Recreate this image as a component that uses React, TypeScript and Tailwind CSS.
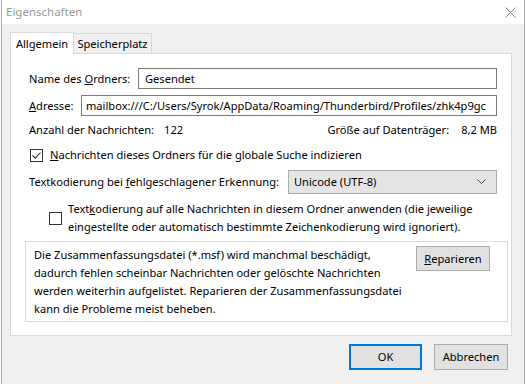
import React from "react";

const font = { fontFamily: '"Noto Sans", "Open Sans", sans-serif' };

function Check({ checked }: { checked?: boolean }) {
  return (
    <span className="flex h-[13px] w-[13px] shrink-0 items-center justify-center border border-[#333] bg-white">
      {checked && (
        <svg width="11" height="11" viewBox="0 0 11 11" fill="none">
          <path d="M1.5 5.5 L4.2 8.2 L9.5 2.5" stroke="#333" strokeWidth="1.1" />
        </svg>
      )}
    </span>
  );
}

export default function App() {
  return (
    <div className="h-[384px] w-[526px] whitespace-nowrap bg-white text-[11.1px] leading-[18px] text-black" style={font}>
      <div className="ml-px flex h-[384px] w-[524px] flex-col border-x border-[#a9a9a9]">
        {/* title bar */}
        <div className="flex h-[24px] shrink-0 items-center justify-between bg-white pl-[4px] pr-[8px]">
          <span className="text-[11.5px] text-[#999]">Eigenschaften</span>
          <svg width="11" height="11" viewBox="0 0 11 11">
            <path d="M0.5 0.5 L10.5 10.5 M10.5 0.5 L0.5 10.5" stroke="#888" strokeWidth="1" />
          </svg>
        </div>

        <div className="flex flex-1 flex-col bg-[#f0f0f0] pl-[8px] pr-[10px] pt-[8px]">
          {/* tabs */}
          <div className="flex h-[21px] items-end">
            <div className="relative z-10 -mb-px flex h-[22px] w-[64px] items-center justify-center border border-b-0 border-[#d9d9d9] bg-white">
              Allgemein
            </div>
            <div className="flex h-[20px] w-[78px] items-center justify-center border border-b-0 border-l-0 border-[#d9d9d9] bg-[#f0f0f0]">
              Speicherplatz
            </div>
          </div>

          {/* panel */}
          <div className="flex h-[283px] w-[502px] shrink-0 flex-col border border-[#d9d9d9] bg-white pl-[18px] pr-[14px] pt-[14px]">
            <div className="flex h-[21px] items-center">
              <span className="w-[109px] shrink-0">
                Name des <u>O</u>rdners:
              </span>
              <div className="flex h-[21px] min-w-0 flex-1 items-center border border-[#7a7a7a] px-[6px]">Gesendet</div>
            </div>

            <div className="mt-[6px] flex h-[21px] items-center">
              <span className="w-[52px] shrink-0">
                <u>A</u>dresse:
              </span>
              <div className="flex h-[21px] min-w-0 flex-1 items-center overflow-hidden border border-[#7a7a7a] px-[4px]">
                mailbox:///C:/Users/Syrok/AppData/Roaming/Thunderbird/Profiles/zhk4p9gc
              </div>
            </div>

            <div className="mt-[5px] flex h-[18px] items-center justify-between">
              <span>
                Anzahl der Nachrichten:<span className="ml-[10px]">122</span>
              </span>
              <span>
                Größe auf Datenträger:<span className="ml-[12px]">8,2 MB</span>
              </span>
            </div>

            <div className="mt-[7px] flex h-[18px] items-center gap-[7px] pl-px">
              <Check checked />
              <span>
                <u>N</u>achrichten dieses Ordners für die globale Suche indizieren
              </span>
            </div>

            <div className="mt-[6px] flex h-[24px] items-center">
              <span className="w-[259px] shrink-0">
                Textkodierung bei <u>f</u>ehlgeschlagener Erkennung:
              </span>
              <div className="flex h-[24px] min-w-0 flex-1 items-center justify-between border border-[#acacac] bg-[#e5e5e5] pl-[5px] pr-[10px]">
                <span>Unicode (UTF-8)</span>
                <svg width="9" height="6" viewBox="0 0 9 6">
                  <path d="M0.5 0.5 L4.5 4.5 L8.5 0.5" stroke="#444" fill="none" strokeWidth="1" />
                </svg>
              </div>
            </div>

            <div className="mt-[6px] flex items-center gap-[6px] pl-[20px]">
              <Check />
              <span>
                Text<u>k</u>odierung auf alle Nachrichten in diesem Ordner anwenden (die jeweilige
                <br />
                eingestellte oder automatisch bestimmte Zeichenkodierung wird ignoriert).
              </span>
            </div>

            <div className="mt-[5px] -ml-[4px] flex h-[81px] w-[483px] items-start justify-between border border-[#d9d9d9] pl-[8px] pr-[17px] pt-[4px]">
              <span>
                Die Zusammenfassungsdatei (*.msf) wird manchmal beschädigt,
                <br />
                dadurch fehlen scheinbar Nachrichten oder gelöschte Nachrichten
                <br />
                werden weiterhin aufgelistet. Reparieren der Zusammenfassungsdatei
                <br />
                kann die Probleme meist beheben.
              </span>
              <div className="flex h-[25px] w-[74px] shrink-0 items-center justify-center border border-[#adadad] bg-[#e1e1e1]">
                <span>
                  <u>R</u>eparieren
                </span>
              </div>
            </div>
          </div>

          {/* footer buttons */}
          <div className="mt-[8px] flex justify-end gap-[12px] pr-[6px]">
            <div className="flex h-[26px] w-[73px] items-center justify-center border-2 border-[#0078d7] bg-[#e1e1e1]">
              OK
            </div>
            <div className="flex h-[26px] w-[74px] items-center justify-center border border-[#adadad] bg-[#e1e1e1]">
              Abbrechen
            </div>
          </div>
        </div>
      </div>
    </div>
  );
}
